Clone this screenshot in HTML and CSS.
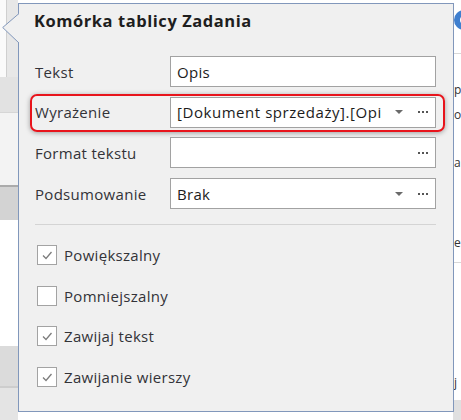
FILE: index.html
```html
<!DOCTYPE html>
<html lang="pl">
<head>
<meta charset="utf-8">
<title>Komórka tablicy Zadania</title>
<link rel="stylesheet" href="styles.css">
</head>
<body>
<div class="page">
  <div class="bg-left">
    <div class="bl-top"><div class="bl-white"></div><div class="bl-gray"></div></div>
    <div class="bl-band1"></div>
    <div class="bl-light"></div>
    <div class="bl-band2"></div>
    <div class="bl-white2"></div>
    <div class="bl-band3"></div>
    <div class="bl-band4"></div>
  </div>
  <div class="bg-mid"></div>
  <div class="bg-right">
    <div class="br-gear"><span class="gear"></span></div>
    <div class="br-line"></div>
    <div class="br-space" style="height:26px"></div>
    <div class="br-text">p</div>
    <div class="br-space" style="height:5px"></div>
    <div class="br-text">o</div>
    <div class="br-space" style="height:28px"></div>
    <div class="br-text">a</div>
    <div class="br-space" style="height:60px"></div>
    <div class="br-text">e</div>
    <div class="br-space" style="height:9px"></div>
    <div class="br-line"></div>
    <div class="br-space" style="height:110px"></div>
    <div class="br-text">j</div>
    <div class="br-space" style="height:7px"></div>
    <div class="br-band"></div>
  </div>

  <div class="popup">
    <svg class="popup-arrow" width="18" height="31" viewBox="0 0 18 31">
      <polygon points="18,0 17,0.5 0.7,14.5 17,30 18,30.5" fill="#f0f0f0"/>
      <polyline points="17,0.5 0.7,14.5 17,30" fill="none" stroke="#8197bb" stroke-width="1"/>
    </svg>
    <h1 class="popup-title">Komórka tablicy Zadania</h1>
    <div class="form">
      <div class="field">
        <span class="field-label">Tekst</span>
        <div class="input"><span class="input-value">Opis</span></div>
      </div>
      <div class="field field--highlight">
        <span class="field-label">Wyrażenie</span>
        <div class="input">
          <span class="input-value input-value--clip">[Dokument sprzedaży].[Opis]</span>
          <span class="drop-arrow"></span>
          <span class="ellipsis"><i></i><i></i><i></i></span>
        </div>
      </div>
      <div class="field">
        <span class="field-label">Format tekstu</span>
        <div class="input">
          <span class="input-value"></span>
          <span class="ellipsis"><i></i><i></i><i></i></span>
        </div>
      </div>
      <div class="field">
        <span class="field-label">Podsumowanie</span>
        <div class="input">
          <span class="input-value">Brak</span>
          <span class="drop-arrow"></span>
          <span class="ellipsis"><i></i><i></i><i></i></span>
        </div>
      </div>
    </div>
    <div class="separator"></div>
    <div class="checks">
      <div class="check"><span class="box"><svg width="18" height="18" viewBox="0 0 18 18"><polyline points="5,9.5 8,12.5 13.5,6" fill="none" stroke="#7c7c7c" stroke-width="1.3"/></svg></span><span class="check-label">Powiększalny</span></div>
      <div class="check"><span class="box"></span><span class="check-label">Pomniejszalny</span></div>
      <div class="check"><span class="box"><svg width="18" height="18" viewBox="0 0 18 18"><polyline points="5,9.5 8,12.5 13.5,6" fill="none" stroke="#7c7c7c" stroke-width="1.3"/></svg></span><span class="check-label">Zawijaj tekst</span></div>
      <div class="check"><span class="box"><svg width="18" height="18" viewBox="0 0 18 18"><polyline points="5,9.5 8,12.5 13.5,6" fill="none" stroke="#7c7c7c" stroke-width="1.3"/></svg></span><span class="check-label">Zawijanie wierszy</span></div>
    </div>
  </div>
</div>
</body>
</html>
```

FILE: styles.css
```css
* { box-sizing: border-box; }
html, body {
  margin: 0;
  padding: 0;
  background: #ffffff;
  font-family: "Open Sans", "Noto Sans", sans-serif;
}
.page {
  position: relative;
  width: 461px;
  height: 420px;
  overflow: hidden;
  display: flex;
}

/* background, left strip */
.bg-left {
  width: 18px;
  display: flex;
  flex-direction: column;
}
.bl-top { height: 77px; display: flex; }
.bl-white { width: 7px; background: #fafafa; border-right: 1px solid #cfcfcf; }
.bl-gray { flex: 1; background: #e7e7e7; }
.bl-band1 { height: 36px; background: #e2e2e2; border-bottom: 1px solid #d6d6d6; }
.bl-light { height: 74px; background: #f3f3f3; border-bottom: 2px solid #ababab; }
.bl-band2 { height: 33px; background: #d3d3d3; }
.bl-white2 { height: 126px; background: #ffffff; }
.bl-band3 { height: 42px; background: #dbdbdb; border-bottom: 2px solid #cdcdcd; }
.bl-band4 { flex: 1; background: #e4e4e4; }

.bg-mid { flex: 1; background: #ffffff; }

/* background, right strip */
.bg-right {
  width: 8px;
  display: flex;
  flex-direction: column;
  overflow: hidden;
  background: #ffffff;
}
.br-gear { height: 53px; padding-top: 10px; padding-left: 1px; }
.gear {
  display: block;
  width: 20px;
  height: 20px;
  border-radius: 50%;
  border: 6px solid #3f7fcf;
  background: #ffffff;
}
.br-line { height: 1px; background: #d8d8d8; }
.br-space { flex: none; }
.br-text {
  height: 20px;
  line-height: 20px;
  font-size: 12px;
  color: #333333;
  white-space: nowrap;
  padding-left: 1px;
}
.br-band { flex: 1; background: #e0e0e0; }

/* popup */
.popup {
  position: absolute;
  left: 18px;
  top: 3px;
  width: 436px;
  height: 409px;
  background: #f0f0f0;
  border: 1px solid #8197bb;
  padding: 0 17px 0 16px;
  display: flex;
  flex-direction: column;
}
.popup-arrow {
  position: absolute;
  left: -17px;
  top: 9px;
}
.popup-title {
  margin: 6px 0 0 -1px;
  font-size: 16.5px;
  line-height: 22px;
  font-weight: 700;
  letter-spacing: 0.55px;
  color: #1e1e1e;
}
.form {
  margin-top: 24px;
  display: flex;
  flex-direction: column;
  gap: 9.7px;
}
.field {
  position: relative;
  display: flex;
  align-items: center;
  height: 31px;
}
.field-label {
  flex: none;
  width: 135px;
  font-size: 15px;
  letter-spacing: 0.3px;
  color: #333338;
}
.field--highlight::before {
  content: "";
  position: absolute;
  top: -3px;
  left: -5px;
  right: -9px;
  bottom: -4px;
  border: 2px solid #e8141c;
  border-radius: 7px;
  box-shadow: 0 1px 5px rgba(0, 0, 0, 0.35);
  pointer-events: none;
}
.input {
  flex: 1;
  min-width: 0;
  height: 31px;
  background: #ffffff;
  border: 1px solid #a2a2a2;
  display: flex;
  align-items: center;
  padding: 0 6px 0 6px;
}
.input-value {
  flex: 1;
  min-width: 0;
  overflow: hidden;
  white-space: nowrap;
  font-size: 15px;
  letter-spacing: 0.3px;
  color: #1c1c1c;
  margin-right: 14px;
}
.input-value--clip {
  letter-spacing: 0.55px;
}
.drop-arrow {
  flex: none;
  width: 0;
  height: 0;
  border-left: 4px solid transparent;
  border-right: 4px solid transparent;
  border-top: 4px solid #6a6a6a;
  margin-right: 15px;
}
.ellipsis {
  flex: none;
  display: flex;
  gap: 2px;
  width: 11px;
}
.ellipsis i {
  display: block;
  width: 2px;
  height: 2px;
  background: #555555;
}
.separator {
  margin-top: 15px;
  height: 1px;
  background: #d4d4d4;
}
.checks {
  margin-top: 20px;
  display: flex;
  flex-direction: column;
  gap: 20.7px;
}
.check {
  display: flex;
  align-items: center;
  height: 20px;
  gap: 7px;
}
.box {
  margin-left: 2px;
  width: 20px;
  height: 20px;
  background: #ffffff;
  border: 1px solid #a3a3a3;
  display: block;
}
.box svg { display: block; }
.check-label {
  font-size: 15px;
  letter-spacing: 0.3px;
  color: #333338;
}
```
